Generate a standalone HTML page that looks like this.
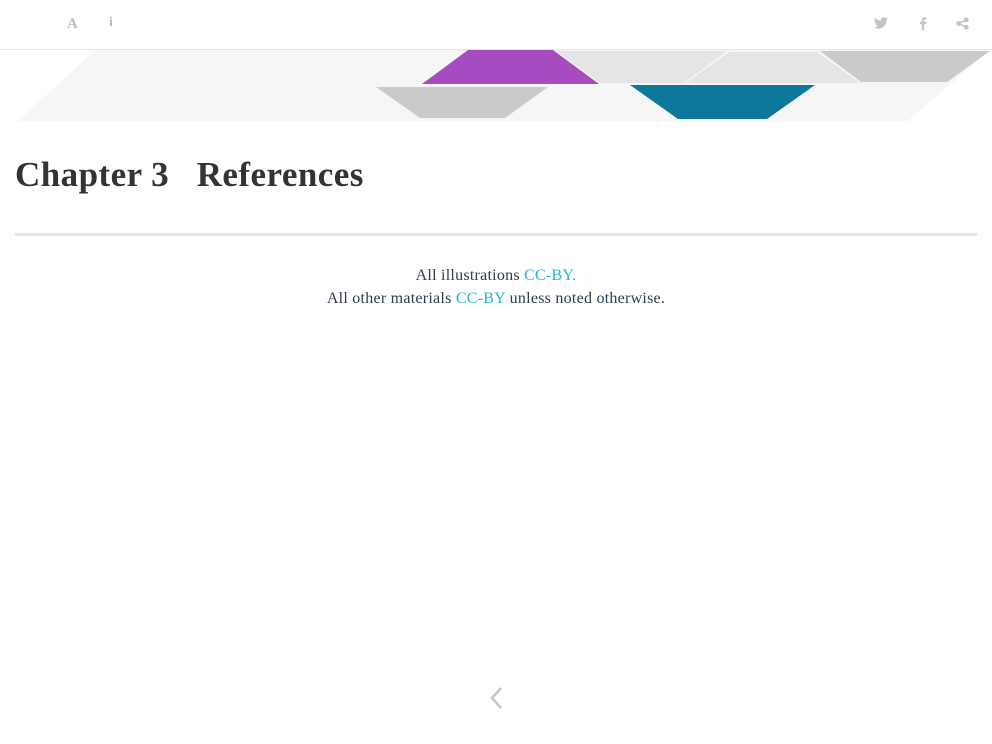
<!DOCTYPE html>
<html><head><style>
body{margin:0;width:992px;height:744px;background:#fff;font-family:"Liberation Serif",serif;position:relative;overflow:hidden}
.top{position:absolute;left:0;top:0;width:992px;height:49px;border-bottom:1px solid #e6e6e6}
.ic{position:absolute;color:#bbb;font-size:15px;font-weight:bold}
h1{position:absolute;left:15px;top:155px;margin:0;font-size:35px;color:#333;font-weight:bold;white-space:pre;letter-spacing:0.45px}
.hr{position:absolute;left:15px;top:233px;width:962px;height:3px;background:#e5e5e5}
.f{position:absolute;left:0;width:992px;text-align:center;font-size:16px;letter-spacing:0.25px;color:#2c3e50}
.f a{color:#1fb8cc;text-decoration:none}
</style></head><body>
<div class="top"></div>
<div class="ic" style="left:67px;top:16px">A</div>
<div class="ic" style="left:109px;top:15px;font-size:14px">i</div>
<svg style="position:absolute;left:874px;top:17px" width="14" height="12" viewBox="0 0 24 20"><path fill="#c4c4c4" d="M24 2.4a9.8 9.8 0 0 1-2.8.8A4.9 4.9 0 0 0 23.3.4a9.900 9.900 0 0 1-3.1 1.2A4.9 4.9 0 0 0 11.8 6 14 14 0 0 1 1.7.9a4.9 4.9 0 0 0 1.5 6.6A4.9 4.9 0 0 1 1 6.9a4.9 4.9 0 0 0 3.9 4.8 4.9 4.9 0 0 1-2.2.1 4.9 4.9 0 0 0 4.6 3.4A9.9 9.9 0 0 1 0 17.2 14 14 0 0 0 7.5 19.4c9.1 0 14-7.5 14-14v-.6A10 10 0 0 0 24 2.4z"/></svg>
<svg style="position:absolute;left:919px;top:17px" width="8" height="13" viewBox="0 0 10 18"><path fill="#c4c4c4" d="M6.5 18V10h2.7l.4-3.2H6.5V4.8c0-.9.3-1.5 1.6-1.5H9.7V.4A22 22 0 0 0 7.3.3C4.9.3 3.3 1.7 3.3 4.4v2.4H.6V10h2.7v8z"/></svg>
<svg style="position:absolute;left:956px;top:17px" width="13" height="13" viewBox="0 0 14 14"><circle cx="11" cy="3" r="2.6" fill="#c4c4c4"/><circle cx="3" cy="7" r="2.6" fill="#c4c4c4"/><circle cx="11" cy="11" r="2.6" fill="#c4c4c4"/><path d="M3 7L11 3M3 7l8 4" stroke="#c4c4c4" stroke-width="1.6"/></svg>
<svg style="position:absolute;left:0;top:0" width="992" height="130">
<polygon points="95,50 990,50 908,121 18,121" fill="#f6f6f6"/>
<polygon points="468,50 553,50 599,84 422,84" fill="#a64bc0"/>
<polygon points="557,51 727,51 684,83 600,83" fill="#e5e5e5"/>
<polygon points="729,52 817,52 860,83 686,83" fill="#e5e5e5"/>
<polygon points="820,51 990,51 947,82 861,82" fill="#cacaca"/>
<polygon points="376,87 548,87 505,118 420,118" fill="#cacaca"/>
<polygon points="630,85 815,85 767,119 678,119" fill="#0e789b"/>
</svg>
<h1>Chapter 3   References</h1>
<div class="hr"></div>
<div class="f" style="top:267px">All illustrations <a>CC-BY.</a></div>
<div class="f" style="top:290px">All other materials <a>CC-BY</a> unless noted otherwise.</div>
<svg style="position:absolute;left:488px;top:686px" width="16" height="24" viewBox="0 0 16 24"><path d="M13 2L4 12l9 10" fill="none" stroke="#c8c8c8" stroke-width="2.6"/></svg>
</body></html>
